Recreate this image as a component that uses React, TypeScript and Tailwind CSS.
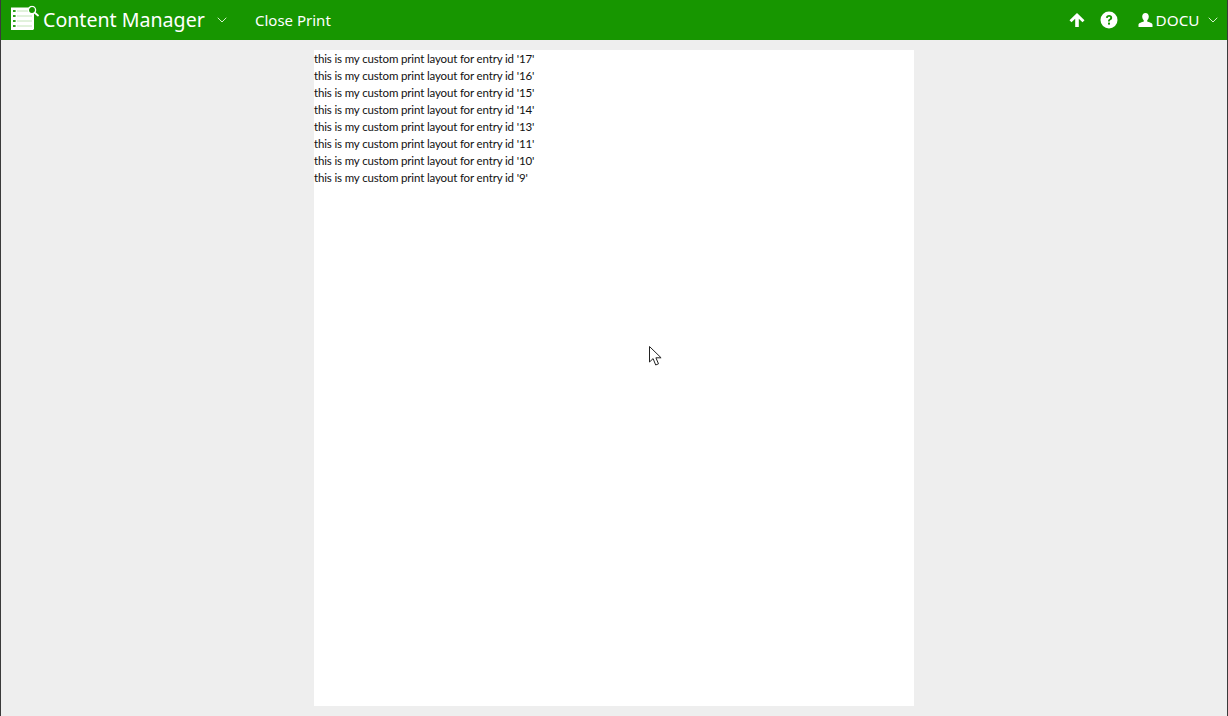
import { ChevronDown } from 'lucide-react'

const entries = ['17', '16', '15', '14', '13', '11', '10', '9']

function Logo() {
  return (
    <svg width="28" height="27" viewBox="0 0 28 27" className="shrink-0 -translate-y-[1.5px]">
      <path d="M0 2h23v21.5l-1 1H0z" fill="#fff" />
      <g fill="#2fa31c">
        <rect x="2" y="4.5" width="2.6" height="2" />
        <rect x="2" y="9.5" width="2.6" height="2" />
        <rect x="2" y="14.5" width="2.6" height="2" />
        <rect x="2" y="19.5" width="2.6" height="2" />
      </g>
      <g stroke="#c3e4b8" strokeWidth="1">
        <path d="M6 5.5h15M6 10.5h15M6 15.5h15M6 20.5h15" />
      </g>
      <circle cx="21" cy="4.5" r="3.6" fill="#179600" stroke="#fff" strokeWidth="1.3" />
      <path d="M23.7 7.2l3.3 2.8" stroke="#fff" strokeWidth="1.8" strokeLinecap="round" />
    </svg>
  )
}

function Cursor() {
  return (
    <svg width="14" height="21" viewBox="0 0 14 21" className="absolute left-[648px] top-[346px]">
      <path
        d="M0.5 0.5v15.5l3.6-3.4 2.6 6.4 2.8-1.2-2.6-6h5.2z"
        fill="#fff"
        stroke="#222"
        strokeWidth="1"
      />
    </svg>
  )
}

export default function App() {
  return (
    <div className="relative flex h-[716px] flex-col overflow-hidden border-x border-x-[#3a3a3a] bg-[#eeeeee] font-['Noto_Sans',sans-serif]">
      <header className="flex h-10 shrink-0 items-center bg-[#179600] text-white">
        <div className="ml-[10px] flex items-center gap-1">
          <Logo />
          <span className="w-[163px] text-[19.6px] leading-none">Content Manager</span>
        </div>
        <ChevronDown className="ml-[7.5px] h-4 w-4 text-[#d5efcc]" strokeWidth={1.5} />
        <span className="ml-[25.5px] text-[15px]">Close Print</span>

        <div className="ml-auto flex items-center pr-[6px]">
          <svg width="16" height="16" viewBox="0 0 16 16">
            <path d="M8 1l7.5 7.3-2 2-3.7-3.6V15H6.2V6.7L2.5 10.3l-2-2z" fill="#fff" />
          </svg>
          <svg width="18" height="18" viewBox="0 0 18 18" className="ml-[15px]">
            <circle cx="9" cy="9" r="8.5" fill="#fff" />
            <path
              d="M5.9 6.8C6.1 5 7.4 4 9.1 4c1.8 0 3.1 1.1 3.1 2.7 0 1.2-.7 1.8-1.5 2.4-.7.5-.9.8-.9 1.5H8c0-1.3.4-1.9 1.2-2.5.6-.5 1-.8 1-1.4 0-.6-.5-1-1.1-1-.7 0-1.2.5-1.3 1.3z"
              fill="#179600"
            />
            <rect x="8" y="11.6" width="2" height="2" fill="#179600" />
          </svg>
          <svg width="15" height="14" viewBox="0 0 15 14" className="ml-[20px]">
            <path
              d="M7.5 0C9.6 0 10.8 1.5 10.8 3.6c0 1.5-.7 3-1.6 3.8v1.2c1.6.6 5.3 1.4 5.3 3.2V14H.5v-2.2c0-1.8 3.7-2.6 5.3-3.2V7.4C4.9 6.6 4.2 5.1 4.2 3.6 4.2 1.5 5.4 0 7.5 0z"
              fill="#fff"
            />
          </svg>
          <span className="ml-[3px] text-[15.3px]">DOCU</span>
          <ChevronDown className="ml-[5.5px] h-4 w-4 text-[#d5efcc]" strokeWidth={1.5} />
        </div>
      </header>

      <main className="flex flex-1 justify-center py-[10px]">
        <div className="w-[600px] bg-white text-[11.5px] leading-[17px] tracking-[-0.15px] text-[#111] font-['Lato',sans-serif]">
          {entries.map((id) => (
            <div key={id}>this is my custom print layout for entry id '{id}'</div>
          ))}
        </div>
      </main>

      <Cursor />
    </div>
  )
}
